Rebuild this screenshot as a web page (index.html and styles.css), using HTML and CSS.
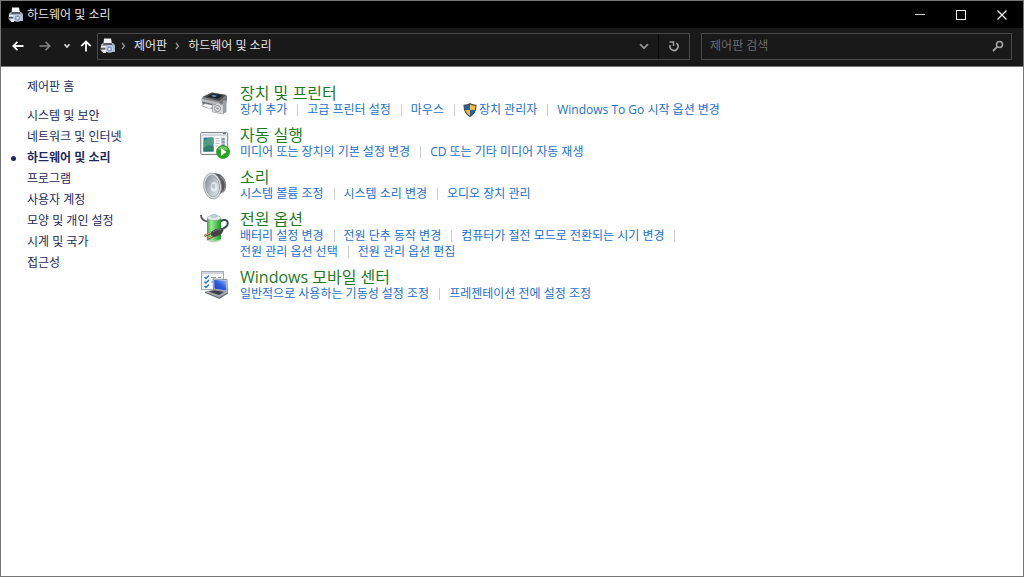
FILE: index.html
```html
<!DOCTYPE html>
<html lang="ko">
<head>
<meta charset="utf-8">
<title>하드웨어 및 소리</title>
<link rel="stylesheet" href="styles.css">
</head>
<body>
<svg class="defs" width="0" height="0" aria-hidden="true">
  <symbol id="hw" viewBox="0 0 16 16">
    <path d="M4 0.5h7l1 5H3.500z" fill="#f4f6fa"/>
    <path d="M1 6.500L3 5h10l2 2v6l-1 1H2l-1.500-2z" fill="#a3a9b3"/>
    <path d="M3.500 5h8.500v2H3.500z" fill="#565c68"/>
    <path d="M1 8h5v1.500H1zM2 11.500h4V15H3z" fill="#e6e9ee"/>
    <path d="M1 10h4v1.500H1z" fill="#555b66"/>
    <circle cx="9.500" cy="11" r="3.800" fill="#c8d7ee"/>
    <circle cx="9.500" cy="11" r="2.700" fill="#8299c4"/>
    <circle cx="9.500" cy="11" r="1.100" fill="#fff"/>
    <path d="M13 7.500h2V14h-2z" fill="#b3b8c0"/>
  </symbol>
</svg>
<div class="window">
  <header class="titlebar">
    <svg class="app-icon" width="16" height="16" aria-hidden="true"><use href="#hw"/></svg>
    <h1 class="title">하드웨어 및 소리</h1>
    <div class="caption-buttons">
      <button class="caption" aria-label="최소화"><svg width="10" height="10"><path d="M0 4.500h10" stroke="#ccc"/></svg></button>
      <button class="caption" aria-label="최대화"><svg width="10" height="10"><rect x=".5" y=".5" width="9" height="9" fill="none" stroke="#eee"/></svg></button>
      <button class="caption" aria-label="닫기"><svg width="10" height="10"><path d="M.5.500l9 9M9.500.500l-9 9" stroke="#eee" stroke-width="1.300"/></svg></button>
    </div>
  </header>

  <div class="toolbar">
    <nav class="history" aria-label="탐색">
      <button class="nav" aria-label="뒤로"><svg width="12" height="10"><path d="M11.500 5H1.500M5.500.800L1.300 5l4.200 4.200" fill="none" stroke="#fff" stroke-width="1.800"/></svg></button>
      <button class="nav" aria-label="앞으로"><svg width="12" height="10"><path d="M.5 5h10M6.500.800L10.700 5 6.500 9.200" fill="none" stroke="#858585" stroke-width="1.600"/></svg></button>
      <button class="nav nav-recent" aria-label="최근 위치"><svg width="8" height="6"><path d="M1.500 1.300L4 4l2.500-2.700" fill="none" stroke="#ddd" stroke-width="1.600"/></svg></button>
      <button class="nav nav-up" aria-label="위로"><svg width="12" height="12"><path d="M6 11.500V1.500M1.300 6.200L6 1.500l4.700 4.700" fill="none" stroke="#fff" stroke-width="1.800"/></svg></button>
    </nav>
    <div class="address">
      <svg width="16" height="16" aria-hidden="true"><use href="#hw"/></svg>
      <svg class="crumb-sep" width="5" height="8"><path d="M1 1l2.500 3L1 7" fill="none" stroke="#999" stroke-width="1.300"/></svg>
      <a class="crumb" href="#">제어판</a>
      <svg class="crumb-sep" width="5" height="8"><path d="M1 1l2.500 3L1 7" fill="none" stroke="#999" stroke-width="1.300"/></svg>
      <a class="crumb" href="#">하드웨어 및 소리</a>
      <button class="history-drop" aria-label="이전 위치"><svg width="10" height="7"><path d="M1 1.200L5 5.200l4-4" fill="none" stroke="#929292" stroke-width="1.800"/></svg></button>
      <button class="refresh" aria-label="새로 고침"><svg width="10" height="12"><path d="M7.300 3.200A4 4 0 1 1 1.300 5" fill="none" stroke="#a0a0a0" stroke-width="1.600"/><path d="M0.500 2h4v4" fill="none" stroke="#a0a0a0" stroke-width="1.500"/></svg></button>
    </div>
    <form class="search">
      <input class="search-input" type="text" placeholder="제어판 검색" aria-label="제어판 검색">
      <button class="search-go" type="button" aria-label="검색"><svg width="12" height="12"><circle cx="7.500" cy="4.500" r="3" fill="none" stroke="#a5a5a5" stroke-width="1.500"/><path d="M5.300 6.700L1 11" stroke="#a5a5a5" stroke-width="1.800"/></svg></button>
    </form>
  </div>

  <div class="content">
    <nav class="sidebar" aria-label="제어판">
      <a class="side-link home" href="#">제어판 홈</a>
      <a class="side-link" href="#">시스템 및 보안</a>
      <a class="side-link" href="#">네트워크 및 인터넷</a>
      <a class="side-link current" href="#" aria-current="page">하드웨어 및 소리</a>
      <a class="side-link" href="#">프로그램</a>
      <a class="side-link" href="#">사용자 계정</a>
      <a class="side-link" href="#">모양 및 개인 설정</a>
      <a class="side-link" href="#">시계 및 국가</a>
      <a class="side-link" href="#">접근성</a>
    </nav>

    <main class="categories">
      <section class="category">
        <svg class="cat-icon" width="30" height="30" aria-hidden="true">
          <path d="M1.500 12L3 9.500 12 5.500l14.500 2.500.5 6-2 6-7 3-15-3z" fill="#85878a"/>
          <path d="M3 10L12 5.500l14 2.500-6.500 6z" fill="#4a4d51"/>
          <path d="M7 9.500l5.500-2.700 10 1.700-4.500 3.200z" fill="#1c2025"/>
          <path d="M11 9l2-1 4 .700-2 1.400z" fill="#69a4d8"/>
          <path d="M2 12l17 3.500V18L2 14.500z" fill="#b9bbbd"/>
          <path d="M19.500 14.500L27 8.500v4l-7.500 5z" fill="#76787b"/>
          <path d="M3.500 15.500l9 2v2.500l-9-2z" fill="#3b3d41"/>
          <path d="M1.500 18.500l3.500-2 8.500 2-3.500 3.500z" fill="#f3f4f5" stroke="#a5a5a5" stroke-width=".6"/>
          <path d="M12.500 17.500h3l1-1.500h3l1 1.500h3v9.500l-11-2z" fill="#d3d5d7" stroke="#97999b" stroke-width=".6"/>
          <path d="M23 13.500h3.500V25L23 27z" fill="#9da0a3"/>
          <circle cx="17.500" cy="21.500" r="3" fill="#eceeef" stroke="#8c8e91"/>
          <circle cx="17.500" cy="21.500" r="1.300" fill="#96999e"/>
        </svg>
        <div class="cat-body">
          <h2 class="cat-title"><a href="#">장치 및 프린터</a></h2>
          <ul class="tasks">
            <li><a href="#">장치 추가</a></li>
            <li><a href="#">고급 프린터 설정</a></li>
            <li><a href="#">마우스</a></li>
            <li class="admin">
              <svg class="shield" width="14" height="14" viewBox="0 0 14 14" aria-hidden="true">
                <path d="M7 .500c2 1.300 4 1.700 6 1.700 0 5.300-1.500 9-6 11.300C2.500 11.200 1 7.500 1 2.200c2 0 4-.4 6-1.700z" fill="#1565c0"/>
                <path d="M7 .500c2 1.300 4 1.700 6 1.700 0 2-.2 3.500-.6 4.800H7zM1.600 7H7v6.500C3.800 11.900 2.200 9.700 1.600 7z" fill="#fdbb2d"/>
                <path d="M7 .700c2 1.200 4 1.500 6 1.600 0 5.200-1.500 8.800-6 11.100C2.500 11.100 1 7.500 1 2.300c2-.1 4-.4 6-1.600z" fill="none" stroke="#4b4b4b" stroke-width="1.100"/>
              </svg>
              <a href="#">장치 관리자</a>
            </li>
            <li><a href="#">Windows To Go 시작 옵션 변경</a></li>
          </ul>
        </div>
      </section>

      <section class="category">
        <svg class="cat-icon" width="30" height="30" aria-hidden="true">
          <rect x=".7" y="3.500" width="27" height="22" rx="1" fill="#e9ebec" stroke="#83888c"/>
          <path d="M2 6h24.500" stroke="#c0c6cb"/>
          <path d="M23 4.700h3" stroke="#5a6269"/>
          <rect x="2.500" y="7.500" width="23.500" height="16.500" fill="#fff"/>
          <rect x="3.500" y="8.500" width="10" height="14" fill="#2e7d91"/>
          <path d="M3.500 13l5-4.500h5v6l-6 8h-4z" fill="#4f9c81"/>
          <path d="M3.500 19l5-3 5 2v4.500h-10z" fill="#2d7c6c"/>
          <path d="M15.500 9.500h4M15.500 12h4M15.500 14.500h4M15.500 17h3" stroke="#b4bcc5"/>
          <path d="M21 8.500h4v11h-4z" fill="#b9c9dd"/>
          <path d="M22 10h2.500M22 13h2.500M22 16h2.500" stroke="#516c94"/>
          <circle cx="23" cy="23" r="6.500" fill="#25a51f" stroke="#1a8918" stroke-width=".7"/>
          <path d="M18 20a6 6 0 0 1 10 0q-5 3-10 0z" fill="#6ac95c"/>
          <path d="M21 19.300l5.500 3.700-5.500 3.700z" fill="#fff"/>
        </svg>
        <div class="cat-body">
          <h2 class="cat-title"><a href="#">자동 실행</a></h2>
          <ul class="tasks">
            <li><a href="#">미디어 또는 장치의 기본 설정 변경</a></li>
            <li><a href="#">CD 또는 기타 미디어 자동 재생</a></li>
          </ul>
        </div>
      </section>

      <section class="category">
        <svg class="cat-icon" width="30" height="30" aria-hidden="true">
          <defs>
            <linearGradient id="cone" x1="0" y1="0" x2="1" y2="1"><stop offset="0" stop-color="#818992"/><stop offset=".55" stop-color="#bdc6ce"/><stop offset="1" stop-color="#e4ebf0"/></linearGradient>
          </defs>
          <path d="M12 2q9-.5 12.500 6 3.500 8-2 13-4 4-9 6z" fill="#55585b"/>
          <path d="M20 5q5 4 5.500 8.500t-3 8" fill="none" stroke="#898d90" stroke-width="1.500"/>
          <ellipse cx="12.500" cy="15" rx="8.800" ry="13" transform="rotate(-8 12.500 15)" fill="#e3e4e5" stroke="#929597" stroke-width=".8"/>
          <ellipse cx="12.500" cy="15" rx="7" ry="10.800" transform="rotate(-8 12.500 15)" fill="url(#cone)" stroke="#8b9299" stroke-width=".7"/>
          <ellipse cx="14" cy="16" rx="3.400" ry="5" fill="#e2e9ef"/>
          <ellipse cx="13.300" cy="15" rx="2" ry="2.600" fill="#bac4cd"/>
        </svg>
        <div class="cat-body">
          <h2 class="cat-title"><a href="#">소리</a></h2>
          <ul class="tasks">
            <li><a href="#">시스템 볼륨 조정</a></li>
            <li><a href="#">시스템 소리 변경</a></li>
            <li><a href="#">오디오 장치 관리</a></li>
          </ul>
        </div>
      </section>

      <section class="category">
        <svg class="cat-icon" width="30" height="30" aria-hidden="true">
          <defs>
            <linearGradient id="cell"><stop offset="0" stop-color="#35a33c"/><stop offset=".3" stop-color="#9be895"/><stop offset=".65" stop-color="#57c757"/><stop offset="1" stop-color="#249031"/></linearGradient>
          </defs>
          <path d="M1 2q0 5 6 6.500" fill="none" stroke="#4a5170" stroke-width="1.800"/>
          <path d="M20 9q2-2.500 5-2 3.500.7 2.500 4.500-1 3-6.500 5" fill="none" stroke="#3b4263" stroke-width="2"/>
          <path d="M7 4.500V27q7 4 14 0V4.500z" fill="url(#cell)"/>
          <path d="M7 26v1.500q7 4 14 0V26q-7 3.500-14 0z" fill="#c6d5c7"/>
          <ellipse cx="14" cy="5" rx="7" ry="2.600" fill="#e3ebe6" stroke="#98a39d" stroke-width=".6"/>
          <ellipse cx="14" cy="3" rx="3" ry="1.700" fill="#c1d0df" stroke="#9eacb9" stroke-width=".5"/>
          <path d="M10.500 19.500l5-3.500 7-.500 1 2-2 3.500-6.500 3-3.500-.500z" fill="#424145"/>
          <path d="M13 19l3.500-2 5-.5" fill="none" stroke="#77757b"/>
          <path d="M11.500 19.500L4.500 23M13 23.500l-6 2.500" stroke="#715537" stroke-width="2.400"/>
          <path d="M11 19.300L5 22.400M12.500 23.200l-5 2.200" stroke="#e5c694"/>
        </svg>
        <div class="cat-body">
          <h2 class="cat-title"><a href="#">전원 옵션</a></h2>
          <ul class="tasks">
            <li><a href="#">배터리 설정 변경</a></li>
            <li><a href="#">전원 단추 동작 변경</a></li>
            <li><a href="#">컴퓨터가 절전 모드로 전환되는 시기 변경</a></li>
            <li><a href="#">전원 관리 옵션 선택</a></li>
            <li><a href="#">전원 관리 옵션 편집</a></li>
          </ul>
        </div>
      </section>

      <section class="category">
        <svg class="cat-icon" width="30" height="30" aria-hidden="true">
          <defs>
            <linearGradient id="lcd" x1="0" y1="1" x2="1" y2="0"><stop offset="0" stop-color="#1539bd"/><stop offset=".55" stop-color="#2e63dc"/><stop offset="1" stop-color="#9ebcf5"/></linearGradient>
          </defs>
          <rect x="1.500" y=".5" width="22" height="18" fill="#f8fafb" stroke="#a5abb0"/>
          <path d="M2 2h21" stroke="#ced4d9" stroke-width="2"/>
          <path d="M4.500 6l1.500 1.500 3-3M4.500 10.500L6 12l3-3M4.500 15L6 16.500l3-3" fill="none" stroke="#287bc4" stroke-width="1.500"/>
          <path d="M11 6.500h5M11 11h2M18 6.500h3" stroke="#8b98a5"/>
          <path d="M13 8l14 .500.500 12-14-2z" fill="#e2e6ec" stroke="#6f7886" stroke-width=".8"/>
          <path d="M14 9l12 .500.500 10-12-1.700z" fill="url(#lcd)"/>
          <path d="M5 20.500l9.500-2 13.500 2.500-9 5z" fill="#a1a5ab"/>
          <path d="M8.500 20.500l6.500-1.300 9 1.900-5 2.900z" fill="#3d4148"/>
          <path d="M5 20.500l14 5.500 9-5v1.500l-8.500 5.500L5 22z" fill="#70757d"/>
        </svg>
        <div class="cat-body">
          <h2 class="cat-title"><a href="#">Windows 모바일 센터</a></h2>
          <ul class="tasks">
            <li><a href="#">일반적으로 사용하는 기동성 설정 조정</a></li>
            <li><a href="#">프레젠테이션 전에 설정 조정</a></li>
          </ul>
        </div>
      </section>
    </main>
  </div>
</div>
</body>
</html>
```

FILE: styles.css
```css
* {
  box-sizing: border-box;
}

body {
  margin: 0;
  background: #fff;
  font-family: "Open Sans", "Noto Sans CJK KR", sans-serif;
  font-size: 12px;
  line-height: 16px;
}

a {
  color: inherit;
  text-decoration: none;
}

.content a:hover {
  text-decoration: underline;
}

button {
  display: flex;
  align-items: center;
  justify-content: center;
  padding: 0;
  border: 0;
  background: none;
}

svg {
  flex: none;
}

.defs {
  position: absolute;
}

.window {
  display: flex;
  flex-direction: column;
  min-height: 100vh;
  border: 1px solid #777;
}

/* Title bar */

.titlebar {
  display: flex;
  align-items: center;
  height: 27px;
  padding: 0 1px 0 7px;
  background: #000;
  color: #e4e4e4;
}

.title {
  flex: 1;
  margin: 0 0 0 3px;
  font-size: 12px;
  font-weight: 400;
}

.caption-buttons {
  display: flex;
}

.caption {
  width: 41px;
  height: 27px;
}

/* Toolbar */

.toolbar {
  display: flex;
  align-items: center;
  height: 39px;
  padding: 0 11px 2px 3px;
  border-bottom: 1px solid #777;
  background: #191919;
}

.history {
  display: flex;
  align-items: center;
  width: 93px;
}

.nav {
  width: 27px;
  height: 24px;
}

.nav-recent {
  width: 17px;
}

.nav-up {
  width: 22px;
}

.address,
.search {
  display: flex;
  align-items: center;
  height: 27px;
  border: 1px solid #494949;
}

.address {
  flex: 593;
  min-width: 0;
  padding-left: 2px;
  color: #e4e4e4;
}

.crumb-sep {
  margin: 0 8px 0 5px;
}

.crumb + .crumb-sep {
  margin-left: 8px;
}

.history-drop {
  width: 30px;
  height: 25px;
  margin-left: auto;
  border-right: 1px solid #080808;
}

.refresh {
  width: 30px;
  height: 25px;
}

.search {
  flex: 311;
  min-width: 0;
  margin: 0 0 0 11px;
}

.search-input {
  flex: 1;
  min-width: 0;
  padding: 0 8px;
  border: 0;
  outline: 0;
  background: none;
  color: #e4e4e4;
  font: inherit;
}

.search-input::placeholder {
  color: #6c6c6c;
  opacity: 1;
}

.search-go {
  width: 26px;
  height: 25px;
}

/* Content */

.content {
  display: flex;
  flex: 1;
}

.sidebar {
  display: flex;
  flex-direction: column;
  gap: 5px;
  width: 199px;
  padding: 12px 0 0 26px;
  color: #1e2a5e;
}

.side-link {
  align-self: flex-start;
}

.home {
  margin-bottom: 8px;
}

.current {
  display: flex;
  align-items: center;
  gap: 11px;
  margin-left: -16px;
  font-weight: 700;
}

.current::before {
  content: "";
  width: 5px;
  height: 5px;
  border-radius: 50%;
  background: #1e2a5e;
}

.categories {
  display: flex;
  flex: 1;
  flex-direction: column;
  gap: 8px;
  max-width: 560px;
  padding-top: 17px;
}

.category {
  display: flex;
  gap: 10px;
}

.cat-icon {
  margin: 3px 0 -4px;
}

.cat-title {
  margin: 0;
  color: #1f7a1f;
  font-size: 16px;
  font-weight: 400;
  line-height: 18px;
}

.tasks {
  display: flex;
  flex-wrap: wrap;
  margin: 0;
  padding: 0;
  color: #1a70d2;
  list-style: none;
}

.tasks li {
  display: flex;
  align-items: center;
}

.tasks li:not(:last-child)::after {
  content: "";
  width: 1px;
  height: 12px;
  margin: 0 9px 0 10px;
  background: #ccc;
}

.shield {
  margin: 0 2px 0 -1px;
}
```
